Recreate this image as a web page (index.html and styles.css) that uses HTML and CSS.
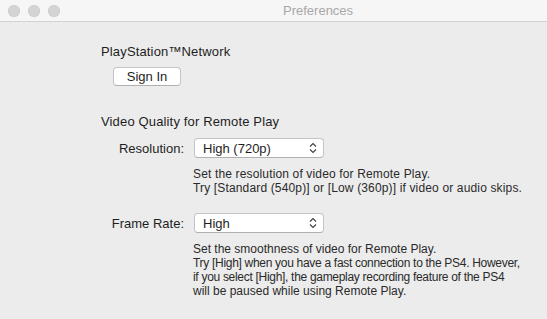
FILE: index.html
```html
<!DOCTYPE html>
<html>
<head>
<meta charset="utf-8">
<link rel="stylesheet" href="styles.css">
</head>
<body>
<div class="window">
  <div class="titlebar">
    <div class="lights">
      <span class="light"></span><span class="light"></span><span class="light"></span>
    </div>
    <div class="title">Preferences</div>
  </div>
  <div class="content">
    <div class="heading">PlayStation™Network</div>
    <div class="btn-row"><button class="button">Sign In</button></div>
    <div class="heading heading2">Video Quality for Remote Play</div>
    <div class="row">
      <div class="label">Resolution:</div>
      <div class="popup"><span>High (720p)</span>
        <svg class="arrows" width="8" height="12" viewBox="0 0 8 12"><path d="M1 4.5 L4 1.5 L7 4.5 M1 7.5 L4 10.5 L7 7.5" fill="none" stroke="#444" stroke-width="1.2"/></svg>
      </div>
    </div>
    <div class="desc">Set the resolution of video for Remote Play.<br>Try [Standard (540p)] or [Low (360p)] if video or audio skips.</div>
    <div class="row row2">
      <div class="label">Frame Rate:</div>
      <div class="popup"><span>High</span>
        <svg class="arrows" width="8" height="12" viewBox="0 0 8 12"><path d="M1 4.5 L4 1.5 L7 4.5 M1 7.5 L4 10.5 L7 7.5" fill="none" stroke="#444" stroke-width="1.2"/></svg>
      </div>
    </div>
    <div class="desc desc-tight">Set the smoothness of video for Remote Play.<br><span class="squeeze">Try [High] when you have a fast connection to the PS4. However,</span><br><span class="squeeze">if you select [High], the gameplay recording feature of the PS4</span><br>will be paused while using Remote Play.</div>
  </div>
</div>
</body>
</html>
```
FILE: styles.css
```css
html, body {
  margin: 0;
  padding: 0;
}
body {
  width: 547px;
  height: 319px;
  overflow: hidden;
  background: #ececec;
  font-family: "Liberation Sans", Arial, sans-serif;
  color: #222;
}
.window {
  display: flex;
  flex-direction: column;
}
.titlebar {
  height: 21px;
  background: #f6f6f6;
  border-bottom: 1px solid #d2d2d2;
  display: flex;
  align-items: center;
}
.lights {
  display: flex;
  gap: 8px;
  padding-left: 8px;
}
.light {
  width: 12px;
  height: 12px;
  border-radius: 50%;
  background: #d4d4d4;
  box-shadow: inset 0 0 0 0.5px #c8c8c8;
}
.title {
  margin-left: 223px;
  font-size: 13px;
  color: #a8a8a8;
}
.content {
  padding-left: 101px;
  display: flex;
  flex-direction: column;
}
.heading {
  font-size: 13px;
  line-height: 16px;
  margin-top: 22px;
  color: #1e1e1e;
  letter-spacing: 0.15px;
}
.heading2 {
  margin-top: 28px;
}
.btn-row {
  padding-left: 12px;
  margin-top: 7px;
}
.button {
  width: 68px;
  height: 19px;
  padding: 0;
  border: 1px solid #c4c4c4;
  border-bottom-color: #b0b0b0;
  border-radius: 4px;
  background: #fff;
  font-family: "Liberation Sans", Arial, sans-serif;
  font-size: 13px;
  color: #1e1e1e;
  display: block;
}
.row {
  display: flex;
  align-items: center;
  margin-top: 8px;
}
.row2 {
  margin-top: 18px;
}
.label {
  width: 83px;
  text-align: right;
  font-size: 13px;
  color: #1e1e1e;
}
.popup {
  margin-left: 10px;
  width: 120px;
  height: 18px;
  border: 1px solid #c4c4c4;
  border-bottom-color: #b0b0b0;
  border-radius: 4px;
  background: #fff;
  display: flex;
  align-items: center;
  justify-content: space-between;
  padding: 0 0 0 8px;
  box-sizing: content-box;
  font-size: 13px;
  color: #1e1e1e;
}
.arrows {
  margin-right: 6px;
}
.desc {
  margin-left: 92px;
  margin-top: 9px;
  font-size: 12px;
  line-height: 14px;
  letter-spacing: 0.15px;
  color: #2a2a2a;
  white-space: nowrap;
}
.desc-tight {
  letter-spacing: 0;
}
.squeeze {
  letter-spacing: -0.3px;
}
```
